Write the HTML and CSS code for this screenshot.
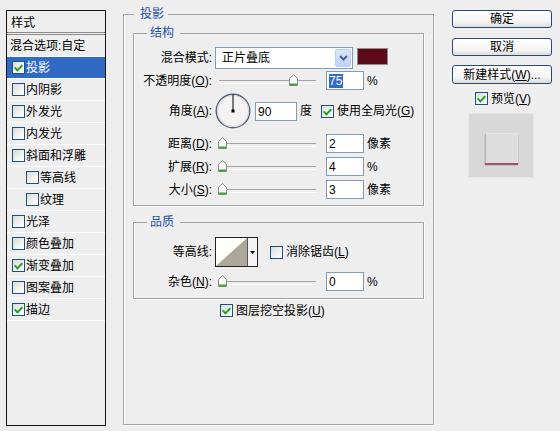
FILE: index.html
```html
<!DOCTYPE html>
<html lang="zh-CN">
<head>
<meta charset="utf-8">
<title>图层样式</title>
<link rel="stylesheet" href="styles.css">
</head>
<body>
<div class="dialog">
  <aside class="styles-panel">
    <div class="panel-head">样式</div>
    <div class="item plain">混合选项:自定</div>
    <div class="item selected"><span class="cb on"></span><span>投影</span></div>
    <div class="item"><span class="cb"></span><span>内阴影</span></div>
    <div class="item"><span class="cb"></span><span>外发光</span></div>
    <div class="item"><span class="cb"></span><span>内发光</span></div>
    <div class="item"><span class="cb"></span><span>斜面和浮雕</span></div>
    <div class="item sub"><span class="cb"></span><span>等高线</span></div>
    <div class="item sub"><span class="cb"></span><span>纹理</span></div>
    <div class="item"><span class="cb"></span><span>光泽</span></div>
    <div class="item"><span class="cb"></span><span>颜色叠加</span></div>
    <div class="item"><span class="cb on"></span><span>渐变叠加</span></div>
    <div class="item"><span class="cb"></span><span>图案叠加</span></div>
    <div class="item"><span class="cb on"></span><span>描边</span></div>
  </aside>

  <fieldset class="group main">
    <legend class="legend-main">投影</legend>

    <fieldset class="group inner structure">
      <legend class="legend-inner">结构</legend>
      <div class="row r-blend">
        <span class="lbl">混合模式:</span>
        <div class="combo">
          <span class="combo-text">正片叠底</span>
          <span class="combo-btn"><svg width="9" height="6" viewBox="0 0 9 6"><path d="M1 1 L4.5 4.5 L8 1" fill="none" stroke="#4d6185" stroke-width="2"/></svg></span>
        </div>
        <span class="swatch"></span>
      </div>
      <div class="row r-opacity">
        <span class="lbl">不透明度(<u>O</u>):</span>
        <div class="slider"><span class="thumb" style="left:74px"><svg width="9" height="12" viewBox="0 0 9 12"><path d="M0.5 4.5 L4.5 0.5 L8.5 4.5 V11.5 H0.5 Z" fill="#fbfbfb" stroke="#8a8a8a"/><path d="M1 10.5 H8" stroke="#3ba33b" stroke-width="2"/></svg></span></div>
        <span class="field"><span class="sel">75</span></span>
        <span class="unit">%</span>
      </div>
      <div class="row r-angle">
        <span class="lbl">角度(<u>A</u>):</span>
        <svg class="dial" width="36" height="36" viewBox="0 0 36 36"><circle cx="18" cy="18" r="16.8" fill="#f3f3f3" stroke="#56607e" stroke-width="1.4"/><circle cx="18" cy="18" r="15.6" fill="none" stroke="#d4d4d4" stroke-width="1"/><line x1="18" y1="18" x2="18" y2="1.5" stroke="#000" stroke-width="1"/><rect x="16.5" y="16.5" width="3" height="3" fill="#000"/></svg>
        <span class="field wide">90</span>
        <span class="unit">度</span>
        <span class="cb on global"></span><span class="cb-text">使用全局光(<u>G</u>)</span>
      </div>
      <div class="row r-dist">
        <span class="lbl">距离(<u>D</u>):</span>
        <div class="slider"><span class="thumb" style="left:3px"><svg width="9" height="12" viewBox="0 0 9 12"><path d="M0.5 4.5 L4.5 0.5 L8.5 4.5 V11.5 H0.5 Z" fill="#fbfbfb" stroke="#8a8a8a"/><path d="M1 10.5 H8" stroke="#3ba33b" stroke-width="2"/></svg></span></div>
        <span class="field">2</span>
        <span class="unit">像素</span>
      </div>
      <div class="row r-spread">
        <span class="lbl">扩展(<u>R</u>):</span>
        <div class="slider"><span class="thumb" style="left:3px"><svg width="9" height="12" viewBox="0 0 9 12"><path d="M0.5 4.5 L4.5 0.5 L8.5 4.5 V11.5 H0.5 Z" fill="#fbfbfb" stroke="#8a8a8a"/><path d="M1 10.5 H8" stroke="#3ba33b" stroke-width="2"/></svg></span></div>
        <span class="field">4</span>
        <span class="unit">%</span>
      </div>
      <div class="row r-size">
        <span class="lbl">大小(<u>S</u>):</span>
        <div class="slider"><span class="thumb" style="left:3px"><svg width="9" height="12" viewBox="0 0 9 12"><path d="M0.5 4.5 L4.5 0.5 L8.5 4.5 V11.5 H0.5 Z" fill="#fbfbfb" stroke="#8a8a8a"/><path d="M1 10.5 H8" stroke="#3ba33b" stroke-width="2"/></svg></span></div>
        <span class="field">3</span>
        <span class="unit">像素</span>
      </div>
    </fieldset>

    <fieldset class="group inner quality">
      <legend class="legend-inner">品质</legend>
      <div class="row r-contour">
        <span class="lbl">等高线:</span>
        <div class="contour">
          <svg class="contour-pic" width="31" height="28" viewBox="0 0 31 28"><rect width="31" height="28" fill="#fffffa"/><polygon points="0,28 31,0 31,28" fill="#aca899"/></svg>
          <span class="contour-btn"><svg width="5" height="3" viewBox="0 0 5 3"><path d="M0 0 H5 L2.5 3 Z" fill="#000"/></svg></span>
        </div>
        <span class="cb anti"></span><span class="cb-text">消除锯齿(<u>L</u>)</span>
      </div>
      <div class="row r-noise">
        <span class="lbl">杂色(<u>N</u>):</span>
        <div class="slider"><span class="thumb" style="left:3px"><svg width="9" height="12" viewBox="0 0 9 12"><path d="M0.5 4.5 L4.5 0.5 L8.5 4.5 V11.5 H0.5 Z" fill="#fbfbfb" stroke="#8a8a8a"/><path d="M1 10.5 H8" stroke="#3ba33b" stroke-width="2"/></svg></span></div>
        <span class="field">0</span>
        <span class="unit">%</span>
      </div>
    </fieldset>

    <div class="knockout"><span class="cb on"></span><span class="cb-text">图层挖空投影(<u>U</u>)</span></div>
  </fieldset>

  <div class="side">
    <button class="btn">确定</button>
    <button class="btn btn-cancel">取消</button>
    <button class="btn btn-new">新建样式(<u>W</u>)...</button>
    <div class="preview-toggle"><span class="cb on"></span><span class="cb-text">预览(<u>V</u>)</span></div>
    <div class="preview-box"><div class="preview-swatch"></div></div>
  </div>
</div>
</body>
</html>
```

FILE: styles.css
```css
* { box-sizing: border-box; }

html, body {
  margin: 0;
  padding: 0;
}

body {
  width: 560px;
  height: 431px;
  overflow: hidden;
  background: #eeeeee;
  color: #000;
  font-family: "Liberation Sans", "Noto Sans CJK SC", sans-serif;
  font-size: 12px;
  line-height: 14px;
}

u { text-decoration: underline; text-underline-offset: 1px; }

.dialog {
  display: flex;
  align-items: flex-start;
  padding-left: 6px;
}

/* ---------- left list ---------- */
.styles-panel {
  flex: none;
  width: 100px;
  height: 416px;
  margin-top: 10px;
  border: 1px solid #151515;
  background: #eeeeee;
}

.panel-head {
  height: 24px;
  padding: 4px 0 0 4px;
  line-height: 16px;
  border-bottom: 3px double #8a8a8a;
}

.item {
  display: flex;
  align-items: center;
  gap: 1px;
  height: 22px;
  padding-left: 5px;
  border-bottom: 1px solid #ffffff;
  line-height: 16px;
}

.item.plain { padding-left: 3px; }
.item.sub { padding-left: 19px; }
.item.selected { background: #316ac5; color: #ffffff; }

/* ---------- checkbox ---------- */
.cb {
  position: relative;
  flex: none;
  width: 13px;
  height: 13px;
  border: 1px solid #1c5180;
  background: linear-gradient(135deg, #dcdcd7 0%, #f3f3ef 60%, #ffffff 100%);
}

.cb.on::after {
  content: "";
  position: absolute;
  left: 3px;
  top: 1px;
  width: 3px;
  height: 6px;
  border: solid #21a121;
  border-width: 0 2px 2px 0;
  transform: rotate(45deg);
}

.cb-text { margin-left: 3px; white-space: nowrap; }

/* ---------- group boxes ---------- */
.group {
  margin: 0;
  min-width: 0;
  border: 1px solid #a4a4a4;
  box-shadow: 1px 1px 0 #ffffff, inset 1px 0 0 #ffffff;
}

.group legend {
  color: #1c4fa6;
  line-height: 16px;
  height: 16px;
  font-size: 12px;
}

.main {
  flex: none;
  width: 311px;
  height: 419px;
  margin: 6px 0 0 17px;
  padding: 3px 9px 0 9px;
}

.legend-main {
  margin-left: 1px;
  padding: 0 4px 0 6px;
}

.inner {
  padding: 0;
}

.legend-inner {
  margin-left: 13px;
  padding: 0 6px 0 3px;
}

.structure { padding: 6px 0 6px 0; }
.quality { margin-top: 8px; padding: 7px 0 7px 0; }

.row {
  display: flex;
  align-items: center;
  height: 19px;
}

.lbl {
  flex: none;
  width: 78px;
  margin-right: 3px;
  text-align: right;
  white-space: nowrap;
}

.r-blend { height: 22px; }
.r-opacity { margin-top: 2px; }
.r-angle { margin-top: 3px; height: 36px; }
.r-dist { margin-top: 5px; }
.r-spread, .r-size { margin-top: 4px; }
.r-contour { height: 30px; }
.r-noise { margin-top: 5px; }

/* combo box */
.combo {
  display: flex;
  align-items: center;
  justify-content: space-between;
  width: 138px;
  height: 22px;
  padding: 1px;
  border: 1px solid #7f9db9;
  background: #ffffff;
}

.combo-text { padding-left: 5px; }

.combo-btn {
  display: flex;
  align-items: center;
  justify-content: center;
  width: 16px;
  height: 18px;
  border: 1px solid #b9cdf7;
  border-radius: 2px;
  background: linear-gradient(#dbe6fe, #c0d2fb);
}

.swatch {
  align-self: flex-start;
  width: 31px;
  height: 17px;
  margin: 1px 0 0 4px;
  border: 1px solid #8e8e8e;
  background: #5c0a1c;
}

/* slider */
.slider {
  position: relative;
  flex: none;
  width: 102px;
  height: 19px;
}

.slider::before {
  content: "";
  position: absolute;
  left: 4px;
  right: 1px;
  top: 9px;
  height: 2px;
  border-top: 1px solid #a3a3a3;
  border-bottom: 1px solid #ffffff;
}

.thumb {
  position: absolute;
  top: 3px;
  width: 9px;
  height: 12px;
  display: block;
}

.thumb svg { display: block; }

/* number fields */
.field {
  flex: none;
  width: 38px;
  height: 19px;
  margin-left: 9px;
  padding: 2px 0 0 2px;
  border: 1px solid #7f9db9;
  background: #ffffff;
  line-height: 14px;
}

.field .sel {
  display: inline-block;
  background: #316ac5;
  color: #ffffff;
  padding: 0 1px 0 0;
}

.field.wide { width: 42px; margin-left: 4px; }

.unit { margin-left: 3px; white-space: nowrap; }

.dial { flex: none; display: block; }

.cb.global { margin-left: 9px; }

/* contour */
.contour {
  display: flex;
  width: 43px;
  height: 30px;
  border: 1px solid #222222;
  background: #ffffff;
}

.contour-pic { display: block; border-right: 1px solid #555; width: 32px; }

.contour-btn {
  display: flex;
  align-items: center;
  justify-content: center;
  flex: 1;
  background: #f4f4f4;
}

.cb.anti { margin-left: 12px; }

.knockout {
  display: flex;
  align-items: center;
  height: 13px;
  margin: 5px 0 0 87px;
}

/* ---------- right column ---------- */
.side {
  flex: none;
  display: flex;
  flex-direction: column;
  width: 100px;
  margin: 10px 0 0 18px;
}

.btn {
  width: 100px;
  height: 18px;
  margin: 0;
  padding: 0;
  border: 1px solid #2b4a78;
  border-radius: 3px;
  background: linear-gradient(#ffffff 0%, #f4f4f2 70%, #dcdcd6 100%);
  color: #000;
  font-family: inherit;
  font-size: 12px;
  line-height: 16px;
  text-align: center;
}

.btn-cancel { margin-top: 10px; }
.btn-new { margin-top: 9px; height: 19px; }

.preview-toggle {
  display: flex;
  align-items: center;
  height: 13px;
  margin: 8px 0 0 23px;
}

.preview-box {
  width: 66px;
  height: 65px;
  margin: 8px 0 0 16px;
  padding-top: 19px;
  border: 1px solid #e6e6e6;
  background: #d8d8d8;
  display: flex;
  justify-content: center;
  align-items: flex-start;
}

.preview-swatch {
  width: 33px;
  height: 30px;
  background: #dedddd;
  border-top: 1px solid #e6e6e6;
  border-left: 1px solid #b8b8b8;
  border-right: 1px solid #e2e2e2;
  box-shadow: 0 2px 1px #9c5566;
}
```
